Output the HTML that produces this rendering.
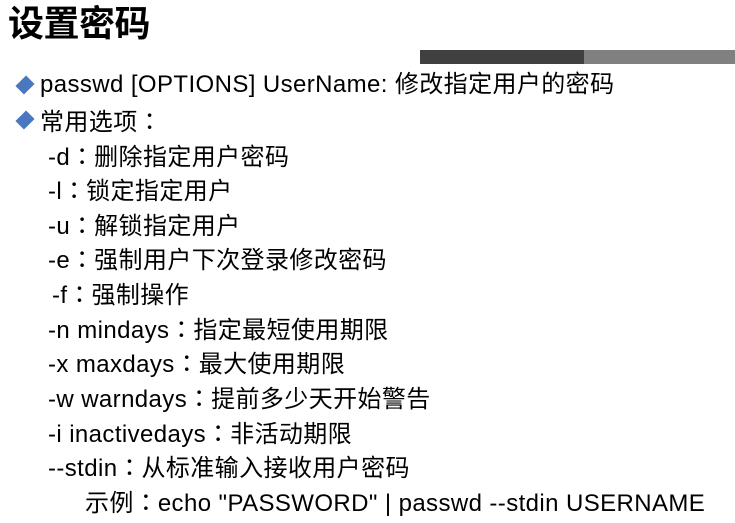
<!DOCTYPE html>
<html><head><meta charset="utf-8"><style>
body{margin:0;width:735px;height:523px;background:#fff;overflow:hidden;position:relative;font-family:"Liberation Sans","Noto Sans CJK SC",sans-serif;color:#000}
.t{position:absolute;left:8px;top:2px;font-size:36px;font-weight:bold;line-height:44px;letter-spacing:-0.5px}
.bar1{position:absolute;left:420px;top:50px;width:164px;height:14px;background:#404040}
.bar2{position:absolute;left:584px;top:50px;width:151px;height:14px;background:#808080}
.l{position:absolute;font-size:24px;line-height:30px;white-space:pre;letter-spacing:0.4px}
.c{font-family:"Noto Sans CJK JP",sans-serif;display:inline-block;width:24px;text-align:center}
.d{position:absolute;width:12px;height:12px;background:#4a78c0;transform:rotate(45deg) scaleY(1.25)}
</style></head><body>
<div class="t">设置密码</div>
<div class="bar1"></div><div class="bar2"></div>
<div class="d" style="left:19px;top:79px"></div>
<div class="l" style="left:40px;top:70px">passwd [OPTIONS] UserName: 修改指定用户的密码</div>
<div class="d" style="left:19px;top:114px"></div>
<div class="l" style="left:40px;top:105px">常用选项<span class="c">：</span></div>
<div class="l" style="left:48px;top:140px">-d<span class="c">：</span>删除指定用户密码</div>
<div class="l" style="left:48px;top:174px">-l<span class="c">：</span>锁定指定用户</div>
<div class="l" style="left:48px;top:209px">-u<span class="c">：</span>解锁指定用户</div>
<div class="l" style="left:48px;top:243px">-e<span class="c">：</span>强制用户下次登录修改密码</div>
<div class="l" style="left:52px;top:278px">-f<span class="c">：</span>强制操作</div>
<div class="l" style="left:48px;top:313px">-n mindays<span class="c">：</span>指定最短使用期限</div>
<div class="l" style="left:48px;top:347px">-x maxdays<span class="c">：</span>最大使用期限</div>
<div class="l" style="left:48px;top:382px">-w warndays<span class="c">：</span>提前多少天开始警告</div>
<div class="l" style="left:48px;top:417px">-i inactivedays<span class="c">：</span>非活动期限</div>
<div class="l" style="left:48px;top:451px">--stdin<span class="c">：</span>从标准输入接收用户密码</div>
<div class="l" style="left:85px;top:486px">示例<span class="c">：</span>echo "PASSWORD" | passwd --stdin USERNAME</div>
</body></html>
